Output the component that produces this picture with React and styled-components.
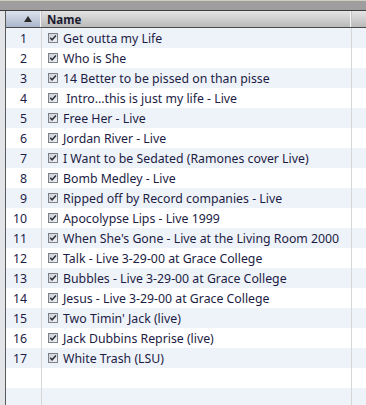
import styled, { createGlobalStyle } from 'styled-components';

const Global = createGlobalStyle`
	html, body { margin: 0; padding: 0; background: #fff; }
	body { width: 366px; height: 405px; overflow: hidden; }
`

const tracks = [
	'Get outta my Life',
	'Who is She',
	'14 Better to be pissed on than pisse',
	' Intro...this is just my life - Live',
	'Free Her - Live',
	'Jordan River - Live',
	'I Want to be Sedated (Ramones cover Live)',
	'Bomb Medley - Live',
	'Ripped off by Record companies - Live',
	'Apocolypse Lips - Live 1999',
	"When She's Gone - Live at the Living Room 2000",
	'Talk - Live 3-29-00 at Grace College',
	'Bubbles - Live 3-29-00 at Grace College',
	'Jesus - Live 3-29-00 at Grace College',
	"Two Timin' Jack (live)",
	'Jack Dubbins Reprise (live)',
	'White Trash (LSU)',
]

const Window = styled.div`
	width: 366px;
	height: 405px;
	display: flex;
	flex-direction: column;
	font-family: "Noto Sans", "Liberation Sans", sans-serif;
	overflow: hidden;
`

const TopBar = styled.div`
	flex-shrink: 0;
	background: #9f9d9d;
	border-top: 1px solid #cfcfc0;
	border-bottom: 1px solid #3c3c3c;
	box-sizing: border-box;
	height: 11px;
`

const Body = styled.div`
	flex: 1;
	display: flex;
	min-height: 0;
`

const Gutter = styled.div`
	width: 5px;
	flex-shrink: 0;
	background: #e2e4e8;
	border-right: 1px solid #5a5a5a;
`

const Table = styled.div`
	flex: 1;
	display: flex;
	flex-direction: column;
	min-width: 0;
`

const Header = styled.div`
	display: grid;
	grid-template-columns: 36px 310px 1fr;
	height: 17px;
	border-bottom: 1px solid #4a4a4a;
	box-sizing: border-box;
	flex-shrink: 0;
`

const HeadCell = styled.div`
	display: flex;
	align-items: center;
	justify-content: ${p => p.$sort ? 'flex-end' : 'flex-start'};
	padding: ${p => p.$sort ? '0 9px 0 0' : '0 0 0 5px'};
	background: ${p => p.$sort
		? 'linear-gradient(#dde3ec, #a9b6cb)'
		: 'linear-gradient(#e4e4e4, #b9b9b9)'};
	border-right: ${p => p.$last ? 'none' : '1px solid #c4c4c4'};
	box-shadow: ${p => p.$last ? 'none' : 'inset -1px 0 0 #f4f4f4'};
	font-size: 11.5px;
	font-weight: bold;
	color: #1b1b30;
	overflow: hidden;
`

const Arrow = styled.div`
	width: 0;
	height: 0;
	border-left: 4px solid transparent;
	border-right: 4px solid transparent;
	border-bottom: 6px solid #2a2a2a;
`

const Rows = styled.div`
	flex: 1;
	display: flex;
	flex-direction: column;
`

const Row = styled.div`
	display: grid;
	grid-template-columns: 36px 310px 1fr;
	height: 20px;
	flex-shrink: 0;
	background: ${p => p.$odd ? '#eef3fa' : '#ffffff'};
	font-size: 12.3px;
	color: #1c1c44;
`

const NumCell = styled.div`
	display: flex;
	align-items: center;
	justify-content: flex-end;
	padding-right: 14px;
	border-right: 1px solid #d6d6d6;
`

const NameCell = styled.div`
	display: flex;
	align-items: center;
	gap: 5px;
	padding-left: 6px;
	border-right: 1px solid #d6d6d6;
	white-space: pre;
	overflow: hidden;
`

const Blank = styled.div``

function Check() {
	return (
		<svg width="10" height="10" viewBox="0 0 10 10" style={{ flexShrink: 0 }}>
			<defs>
				<linearGradient id="cb" x1="0" y1="0" x2="1" y2="1">
					<stop offset="0" stopColor="#c9ccd2" />
					<stop offset="1" stopColor="#f4f5f7" />
				</linearGradient>
			</defs>
			<rect x="0.5" y="0.5" width="9" height="9" fill="url(#cb)" stroke="#7c8088" />
			<path d="M2.2 4.8 L4.1 6.8 L7.9 2.6" fill="none" stroke="#2b2f3a" strokeWidth="1.5" />
		</svg>
	)
}

export default function App() {
	const rows = []
	for (let i = 0; i < 19; i++) rows.push(i)
	return (
		<Window>
			<Global />
			<TopBar />
			<Body>
				<Gutter />
				<Table>
					<Header>
						<HeadCell $sort><Arrow /></HeadCell>
						<HeadCell>Name</HeadCell>
						<HeadCell $last />
					</Header>
					<Rows>
						{rows.map(i => (
							<Row key={i} $odd={i % 2 === 0}>
								<NumCell>{i < tracks.length ? i + 1 : ''}</NumCell>
								<NameCell>
									{i < tracks.length && <><Check />{tracks[i]}</>}
								</NameCell>
								<Blank />
							</Row>
						))}
					</Rows>
				</Table>
			</Body>
		</Window>
	)
}
